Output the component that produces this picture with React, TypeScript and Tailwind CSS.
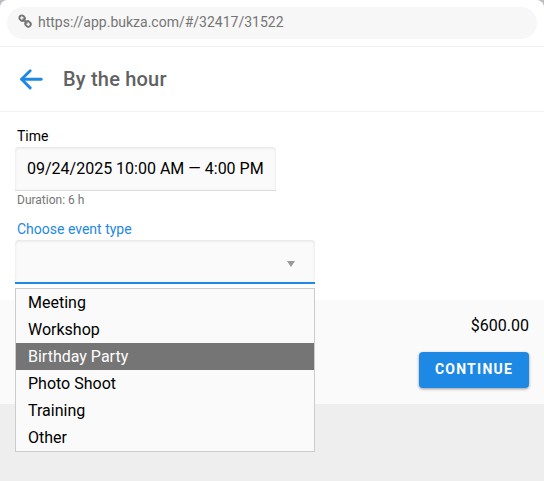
const eventTypes = ["Meeting", "Workshop", "Birthday Party", "Photo Shoot", "Training", "Other"];
const highlighted = "Birthday Party";

function LinkIcon() {
  return (
    <svg className="-mt-1" width="14" height="14" viewBox="0 0 14 14" fill="none" stroke="#757575" strokeWidth="1.9" strokeLinecap="round">
      <rect x="1.3" y="1.7" width="5.6" height="4.8" rx="2.2" transform="rotate(45 4.1 4.1)" />
      <rect x="7.2" y="7.6" width="5.6" height="4.8" rx="2.2" transform="rotate(45 10 10)" />
      <path d="M5.2 5.2l3.6 3.6" />
    </svg>
  );
}

function BackIcon() {
  return (
    <svg className="-mt-px" width="24" height="24" viewBox="0 0 24 24" fill="none" stroke="#1e88e5" strokeWidth="2.9" strokeLinecap="round" strokeLinejoin="round">
      <path d="M22.2 12.3H2.8" />
      <path d="M11.2 3.7l-8.6 8.6 8.6 8.6" />
    </svg>
  );
}

function AddressBar() {
  return (
    <div className="h-[47px] border-b border-[#f1f1f1] px-[7px] pt-[7px]">
      <div className="flex h-8 items-center rounded-full bg-[#f7f7f7] pl-[11px] text-sm text-[#757575]">
        <LinkIcon />
        <span className="ml-1.5 -mt-0.5">https://app.bukza.com/#/32417/31522</span>
      </div>
    </div>
  );
}

function EventTypeSelect() {
  return (
    <div className="relative w-[300px]">
      <div className="flex h-11 items-center justify-end rounded-t border-b-2 border-[#1e88e5] bg-[#fafafa] pr-5 pt-1.5 shadow-[inset_0_1px_3px_rgba(0,0,0,0.1)]">
        <svg width="8" height="6" viewBox="0 0 8 6" fill="#999999">
          <path d="M0 0h8L4 6z" />
        </svg>
      </div>
      <ul className="absolute left-0 top-12 w-full border border-[#cccccc] bg-[#fafafa]">
        {eventTypes.map((type) => (
          <li
            key={type}
            className={
              type === highlighted
                ? "h-[27px] bg-[#757575] pl-3 text-base leading-[27px] text-white"
                : "h-[27px] pl-3 text-base leading-[27px] text-black"
            }
          >
            {type}
          </li>
        ))}
      </ul>
    </div>
  );
}

export default function App() {
  return (
    <div className="h-[481px] w-[544px] overflow-hidden bg-[#b9bec5] font-['Roboto',sans-serif]">
      <div className="h-full rounded-t-lg bg-[#eeeeee]">
        <div className="h-[300px] rounded-t-lg bg-white">
          <AddressBar />

          <header className="flex h-[65px] items-center border-b border-[#f1f1f1] pl-[19px]">
            <BackIcon />
            <h1 className="ml-5 text-xl font-medium tracking-[0.2px] text-[#616161]">By the hour</h1>
          </header>

          <main className="px-[15px] pt-3.5">
            <div className="h-[21px] pl-0.5 text-sm leading-5 text-black">Time</div>
            <div className="flex h-11 w-[261px] items-center rounded-t border-b border-[#dcdcdc] bg-[#fafafa] pl-3 text-base text-black shadow-[inset_0_1px_3px_rgba(0,0,0,0.1)]">
              09/24/2025 10:00 AM — 4:00 PM
            </div>
            <div className="h-7 pl-0.5 text-xs leading-[18px] text-[#757575]">Duration: 6 h</div>
            <div className="h-[21px] pl-0.5 text-sm leading-5 text-[#1e88e5]">Choose event type</div>
            <EventTypeSelect />
          </main>
        </div>

        <div className="flex h-[104px] flex-col items-end bg-[#fafafa] pr-[15px] pt-3.5">
          <div className="h-[38px] text-base text-black">$600.00</div>
          <button className="h-9 w-[110px] rounded bg-[#1e88e5] pb-0.5 text-sm font-bold tracking-[1.25px] text-white shadow-[0_1px_3px_rgba(0,0,0,0.4)]">
            CONTINUE
          </button>
        </div>
      </div>
    </div>
  );
}
